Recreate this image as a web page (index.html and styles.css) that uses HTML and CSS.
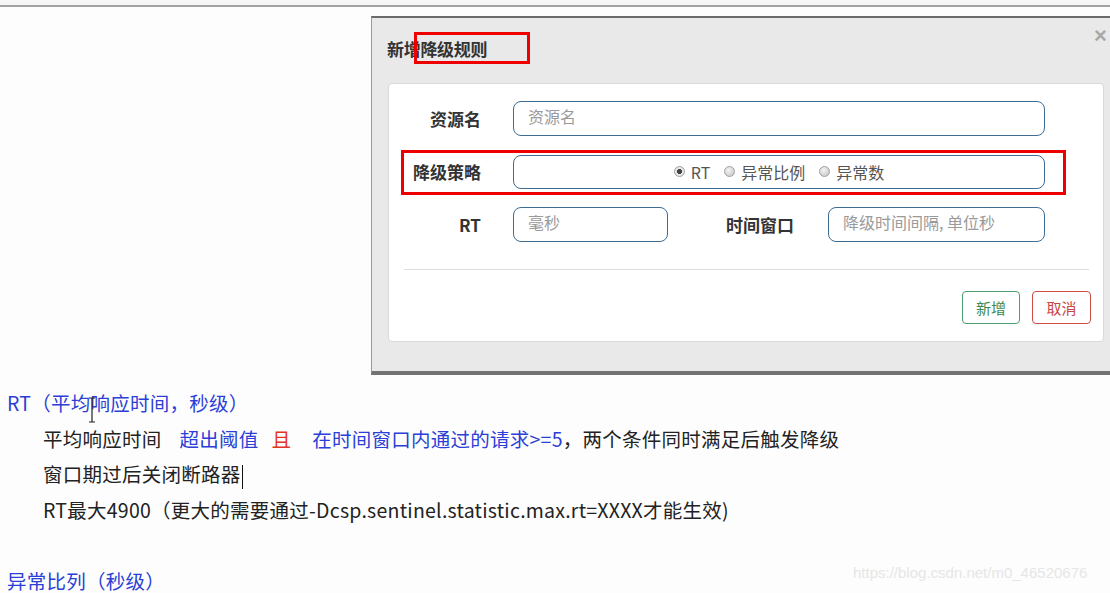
FILE: index.html
```html
<!DOCTYPE html>
<html lang="zh-CN">
<head>
<meta charset="utf-8">
<title>新增降级规则</title>
<link rel="stylesheet" href="styles.css">
</head>
<body>
<div class="topline"></div>
<div class="modal">
  <div class="modal-header">
    <h4 class="modal-title">新增降级规则<span class="mark mark-title"></span></h4>
    <span class="close">×</span>
  </div>
  <div class="panel">
    <div class="form">
      <div class="row">
        <label class="label">资源名</label>
        <div class="input"><span class="ph">资源名</span></div>
      </div>
      <div class="row">
        <label class="label">降级策略</label>
        <div class="input radios">
          <span class="radio checked"></span><span class="rtext">RT</span>
          <span class="radio"></span><span class="rtext">异常比例</span>
          <span class="radio"></span><span class="rtext">异常数</span>
        </div>
        <span class="mark mark-row"></span>
      </div>
      <div class="row">
        <label class="label">RT</label>
        <div class="split">
          <div class="input short"><span class="ph">毫秒</span></div>
          <label class="label label2">时间窗口</label>
          <div class="input mid"><span class="ph">降级时间间隔, 单位秒</span></div>
        </div>
      </div>
    </div>
    <hr class="divider">
    <div class="actions">
      <button class="btn btn-ok">新增</button>
      <button class="btn btn-cancel">取消</button>
    </div>
  </div>
</div>
<div class="notes">
  <p class="h blue">RT（平均响应时间，秒级）<svg class="ibeam" width="8" height="26" viewBox="0 0 8 26"><path d="M1 1h6M4 1v24M1 25h6" stroke="#222" stroke-width="1.2" fill="none"/></svg></p>
  <p class="i">平均响应时间<span class="blue gap1">超出阈值</span><span class="red gap2">且</span><span class="blue gap3">在时间窗口内通过的请求&gt;=5</span>，两个条件同时满足后触发降级</p>
  <p class="i">窗口期过后关闭断路器<span class="caret"></span></p>
  <p class="i">RT最大4900（更大的需要通过-Dcsp.sentinel.statistic.max.rt=XXXX才能生效)</p>
  <p class="i empty">&nbsp;</p>
  <p class="h blue">异常比列（秒级）</p>
</div>
<div class="watermark">https://blog.csdn.net/m0_46520676</div>
</body>
</html>
```
FILE: styles.css
```css
html, body {
  margin: 0;
  padding: 0;
  background: #fdfdfd;
  width: 1110px;
  height: 593px;
  overflow: hidden;
  position: relative;
  font-family: "Noto Sans CJK SC", "Noto Sans", sans-serif;
  color: #222;
}

.topline {
  height: 5px;
  background: #f6f6f6;
  border-bottom: 2px solid #a3a3a3;
}

.modal {
  margin: 9px 0 0 371px;
  width: 760px;
  background: #e9e9e9;
  border-top: 2px solid #6a6a6a;
  border-left: 1px solid #9a9a9a;
  border-bottom: 4px solid #737373;
  padding-bottom: 29px;
}

.modal-header {
  height: 65px;
  display: flex;
  align-items: center;
  padding: 0 0 0 15px;
  position: relative;
}

.modal-title {
  margin: 0;
  font-size: 17px;
  font-weight: bold;
  color: #333;
  position: relative;
  top: -2px;
  letter-spacing: -0.3px;
}

.close {
  position: absolute;
  left: 722px;
  top: 5px;
  font-size: 22px;
  font-weight: bold;
  color: #a8a8a8;
  font-family: "Liberation Sans", sans-serif;
}

.mark {
  position: absolute;
  border: 3px solid #ee0000;
  box-sizing: border-box;
}

.mark-title {
  left: 27px;
  top: -4px;
  width: 116px;
  height: 32px;
}

.panel {
  margin-left: 16px;
  width: 714px;
  background: #fff;
  border: 1px solid #d9d9d9;
  border-radius: 4px;
  padding: 17px 0 17px 0;
}

.form {
  display: flex;
  flex-direction: column;
  gap: 18px;
}

.row {
  position: relative;
  display: grid;
  grid-template-columns: 92px 532px;
  column-gap: 32px;
  align-items: center;
  height: 35px;
}

.label {
  text-align: right;
  font-size: 17px;
  font-weight: bold;
  color: #333;
}

.input {
  height: 35px;
  box-sizing: border-box;
  border: 1px solid #3e6c93;
  border-radius: 8px;
  display: flex;
  align-items: center;
  padding-left: 14px;
  background: #fff;
}

.row:nth-child(2) .input { height: 34px; }

.ph {
  font-size: 16px;
  color: #9a9a9a;
  position: relative;
  top: -3px;
}

.radios {
  justify-content: center;
  padding-left: 0;
  font-size: 16px;
  color: #555;
}

.radio {
  width: 11px;
  height: 11px;
  border-radius: 50%;
  box-sizing: border-box;
  border: 1px solid #a0a0a0;
  background: radial-gradient(circle at 40% 35%, #f4f4f4, #c2c2c2);
  margin-right: 6px;
  position: relative;
}

.radio.checked {
  background: radial-gradient(circle, #444 0 2.4px, #e8e8e8 2.8px);
}

.rtext {
  margin-right: 14px;
}

.rtext:last-child { margin-right: 0; }

.mark-row {
  left: 12px;
  top: -4px;
  width: 665px;
  height: 45px;
}

.split {
  display: flex;
  align-items: center;
}

.short { width: 155px; }

.label2 { width: 126px; }

.mid {
  width: 217px;
  margin-left: 34px;
}

.divider {
  margin: 27px 14px 0 15px;
  border: 0;
  border-top: 1px solid #dedede;
  height: 0;
}

.actions {
  display: flex;
  justify-content: flex-end;
  gap: 12px;
  padding-right: 12px;
  margin-top: 21px;
}

.btn {
  height: 33px;
  width: 58px;
  background: #fff;
  border-radius: 4px;
  font-family: "Noto Sans CJK SC", sans-serif;
  font-size: 15px;
  padding: 0;
  box-sizing: border-box;
}

.btn-ok {
  border: 1.5px solid #4c9d6d;
  color: #3a8a52;
}

.btn-cancel {
  width: 59px;
  border: 1.5px solid #cc4d47;
  color: #c94640;
}

.notes {
  margin-top: 10px;
  font-size: 19.5px;
  line-height: 35.5px;
  letter-spacing: 0.25px;
}

.notes p {
  margin: 0;
  white-space: nowrap;
  position: relative;
}

.notes .h { padding-left: 7px; }
.notes .i { padding-left: 43px; }

.blue { color: #2b3fd6; }
.red { color: #e2341f; }

.gap1 { margin-left: 18px; }
.gap2 { margin-left: 13px; }
.gap3 { margin-left: 21px; }

.caret {
  display: inline-block;
  width: 1px;
  height: 24px;
  background: #111;
  vertical-align: middle;
  margin-left: 1px;
}

.ibeam {
  position: absolute;
  left: 88px;
  top: 12px;
}

.watermark {
  position: absolute;
  left: 853px;
  top: 564px;
  font-family: "Liberation Sans", Arial, sans-serif;
  font-size: 15px;
  color: #e6e6e6;
}
```
